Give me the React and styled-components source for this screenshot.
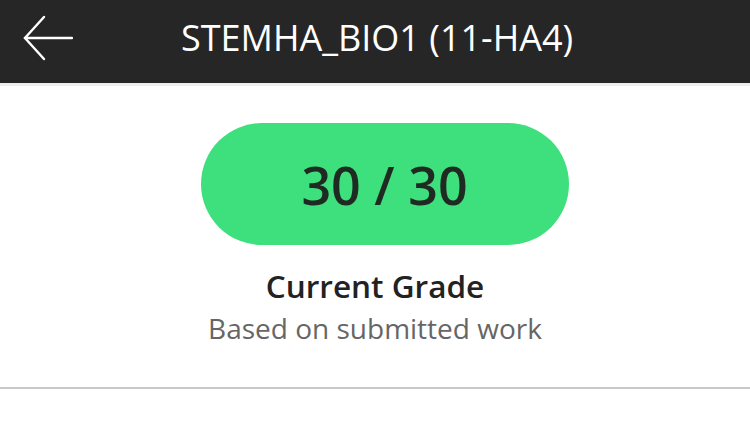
import React from 'react'
import styled, { createGlobalStyle } from 'styled-components'

const GlobalStyle = createGlobalStyle`
  html, body {
    margin: 0;
    padding: 0;
    background: #fff;
  }
  body {
    font-family: 'Open Sans', 'Noto Sans', sans-serif;
  }
`

const Screen = styled.div`
  width: 750px;
  height: 426px;
  overflow: hidden;
  background: #fff;
`

const Header = styled.header`
  height: 75px;
  padding-bottom: 8px;
  background: #262626;
  display: flex;
  align-items: center;
  border-bottom: 3px solid #ededed;
`

const BackButton = styled.button`
  width: 96px;
  height: 60px;
  padding: 0 0 0 23px;
  border: 0;
  background: none;
  display: flex;
  align-items: center;
  cursor: pointer;
`

const Title = styled.h1`
  margin: 0 0 0 85px;
  font-family: 'Open Sans', sans-serif;
  font-weight: 400;
  font-size: 36px;
  color: #fff;
`

const Summary = styled.section`
  display: flex;
  flex-direction: column;
  align-items: center;
  padding: 37px 0 0;
  height: 303px;
  box-sizing: border-box;
  border-bottom: 2px solid #c8c8c8;
`

const GradePill = styled.div`
  width: 368px;
  height: 122px;
  margin-left: 19px;
  border-radius: 61px;
  background: #3de07c;
  display: flex;
  align-items: center;
  justify-content: center;
  font-family: 'Open Sans', sans-serif;
  font-weight: 600;
  font-size: 52px;
  color: #1f2a22;
`

const Label = styled.div`
  margin-top: 22px;
  font-family: 'Open Sans', sans-serif;
  font-weight: 600;
  font-size: 31.5px;
  line-height: 38px;
  color: #222;
`

const Caption = styled.div`
  margin-top: 6px;
  font-family: 'Open Sans', sans-serif;
  font-size: 28px;
  line-height: 34px;
  color: #666;
`

const BackArrow = () => (
  <svg width="50" height="46" viewBox="0 0 50 46" fill="none" stroke="#fff" strokeWidth="2.4" strokeLinecap="round">
    <path d="M2 23 H49" />
    <path d="M21 2 L2 23 L21 44" />
  </svg>
)

export default function App() {
  return (
    <Screen>
      <GlobalStyle />
      <Header>
        <BackButton aria-label="Back">
          <BackArrow />
        </BackButton>
        <Title>STEMHA_BIO1 (11-HA4)</Title>
      </Header>
      <Summary>
        <GradePill>30 / 30</GradePill>
        <Label>Current Grade</Label>
        <Caption>Based on submitted work</Caption>
      </Summary>
    </Screen>
  )
}
